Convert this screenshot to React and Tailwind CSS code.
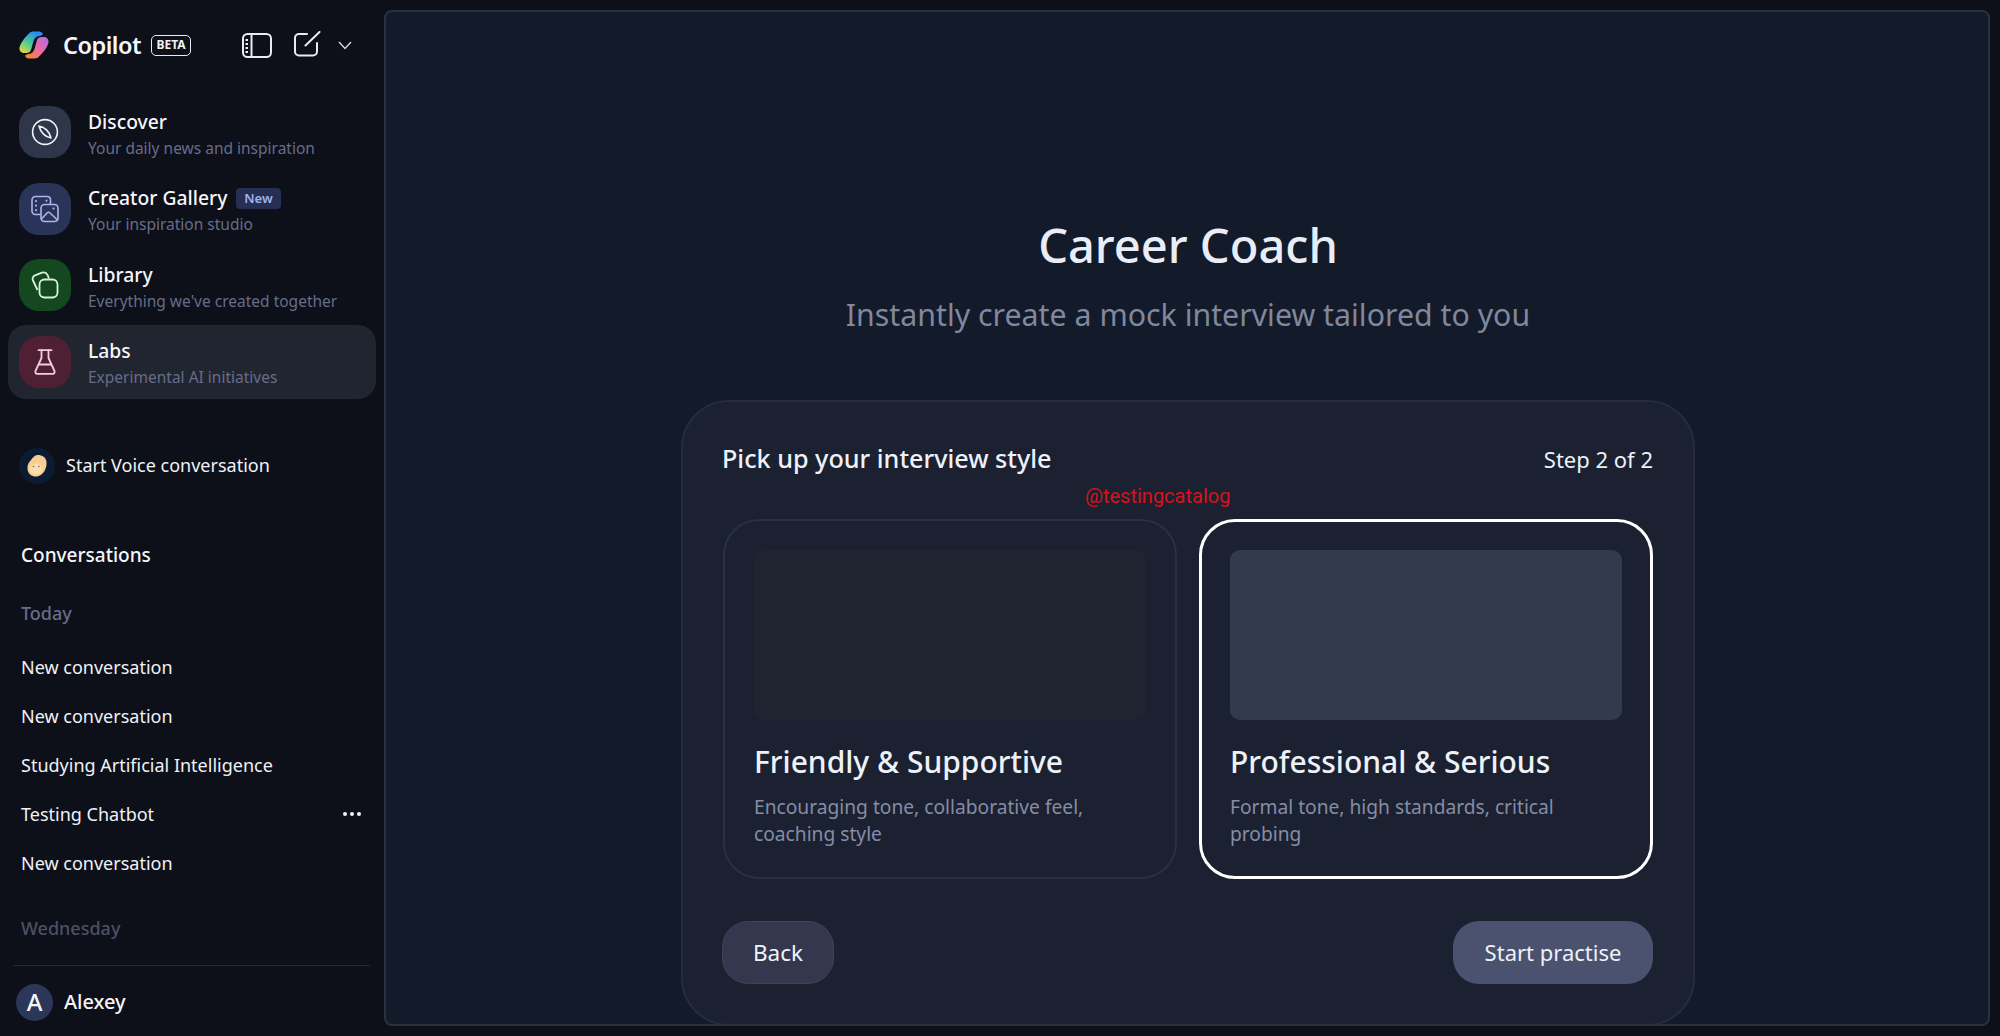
import React from "react";

const FONT = "font-['Noto_Sans',sans-serif]";

function Logo() {
  return (
    <svg width="30" height="28" viewBox="0 0 30 28" fill="none">
      <defs>
        <linearGradient id="lb" x1="3" y1="22" x2="17" y2="2" gradientUnits="userSpaceOnUse">
          <stop offset="0" stopColor="#f6d33f" />
          <stop offset="0.45" stopColor="#4fcf8f" />
          <stop offset="1" stopColor="#2a8cf0" />
        </linearGradient>
        <linearGradient id="rb" x1="29" y1="7" x2="10" y2="28" gradientUnits="userSpaceOnUse">
          <stop offset="0" stopColor="#b56ce8" />
          <stop offset="0.55" stopColor="#ee6a9a" />
          <stop offset="1" stopColor="#f6892c" />
        </linearGradient>
      </defs>
      <path d="M10 2.5 C11 1 13 0.5 15 0.5 H20 C22 0.5 23.5 1.5 24 3.5 L21 5 C17.5 5 15.5 7 14.5 10 L12 19 C11.4 21 9.6 22 7.5 22 H5 C2 22 0 19.5 0.5 16.5 C1.5 11.5 6 6.5 10 2.5Z" fill="url(#lb)" />
      <path d="M20 25.5 C19 27 17 27.5 15 27.5 H10 C8 27.5 6.5 26.5 6 24.5 L9 23 C12.5 23 14.5 21 15.5 18 L18 9 C18.6 7 20.4 6 22.5 6 H25 C28 6 30 8.5 29.5 11.5 C28.5 16.5 24 21.5 20 25.5Z" fill="url(#rb)" />
    </svg>
  );
}

function SidebarToggle() {
  return (
    <svg width="30" height="25" viewBox="0 0 30 25" fill="none" stroke="#e8ebf2" strokeWidth="2">
      <rect x="1" y="1" width="28" height="23" rx="4.5" />
      <path d="M9.5 1 V24" />
      <path d="M3.5 7 H6 M3.5 11 H6 M3.5 15 H6 M3.5 19 H6" strokeWidth="1.8" />
    </svg>
  );
}

function Compose() {
  return (
    <svg width="27" height="26" viewBox="0 0 27 26" fill="none" stroke="#e8ebf2" strokeWidth="2" strokeLinecap="round">
      <path d="M13 3 H5 C2.8 3 1 4.8 1 7 V20.5 C1 22.7 2.8 24.5 5 24.5 H19 C21.2 24.5 23 22.7 23 20.5 V12" />
      <path d="M11.5 14.5 L25.5 1" />
    </svg>
  );
}

function CompassIcon() {
  return (
    <svg width="28" height="28" viewBox="0 0 28 28" fill="none" stroke="#f1f3f8" strokeWidth="1.6">
      <circle cx="14" cy="14" r="12.4" />
      <path d="M8 8 C13.5 9 18.5 13.5 20 20 C14.5 19 9.5 14.5 8 8Z" strokeLinejoin="round" />
    </svg>
  );
}

function GalleryIcon() {
  return (
    <svg width="28" height="28" viewBox="0 0 28 28" fill="none" stroke="#a9b7ec" strokeWidth="1.6" strokeLinejoin="round" strokeLinecap="round">
      <path d="M9 19.5 H4.5 C2.5 19.5 1 18 1 16 V5 C1 3 2.5 1.5 4.5 1.5 H16 C18 1.5 19.5 3 19.5 5 V9" />
      <path d="M5 6 V6.2 M5 10.5 V10.7 M5 15 V15.2 M15.5 5.5 V5.7" strokeWidth="2" />
      <rect x="10" y="9.5" width="17" height="17" rx="3.5" />
      <path d="M10.5 24 L16 18 C17 17 18 17 19 18 L26.5 25" />
      <circle cx="22.5" cy="13.5" r="1.1" fill="#a9b7ec" stroke="none" />
    </svg>
  );
}

function LibraryIcon() {
  return (
    <svg width="28" height="28" viewBox="0 0 28 28" fill="none" stroke="#d9f2dd" strokeWidth="1.8" strokeLinejoin="round">
      <path d="M6.5 19 L2 9.5 C1 7.5 2 5.2 4 4.4 L11 1.7 C13.2 0.9 15.5 2 16.6 4 L18 7.5" />
      <rect x="8.5" y="8.5" width="18" height="18" rx="5" />
    </svg>
  );
}

function FlaskIcon() {
  return (
    <svg width="22" height="26" viewBox="0 0 22 26" fill="none" stroke="#f6cdd7" strokeWidth="1.8" strokeLinejoin="round" strokeLinecap="round">
      <path d="M4.5 1.2 H17.5" />
      <path d="M7.5 1.2 V9 L1.5 22 C1 23.5 1.8 24.8 3.2 24.8 H18.8 C20.2 24.8 21 23.5 20.5 22 L14.5 9 V1.2" />
      <path d="M4.8 15.5 H17.2" />
    </svg>
  );
}

function VoiceFace() {
  return (
    <div className="w-[36px] h-[36px] rounded-full bg-[#0c1b34] flex items-center justify-center">
      <svg width="22" height="24" viewBox="0 0 22 24">
        <path d="M12 1 C16 1 20 3 20.5 8 C21 14 18 21 11 22.5 C6 23 2 20 1.5 15 C1 11 3 8 5 6 C7 3 9 1 12 1Z" fill="#f8cd92" />
        <ellipse cx="10" cy="15" rx="6.5" ry="5.5" fill="#fbdcb0" />
        <circle cx="7.5" cy="12.5" r="0.8" fill="#8a6a4a" />
        <circle cx="13" cy="12.5" r="0.8" fill="#8a6a4a" />
      </svg>
    </div>
  );
}

function NavItem({ title, sub, tile, icon, active, badge }) {
  return (
    <div className={`h-[74px] w-[368px] rounded-[18px] flex items-center pl-[11px] ${active ? "bg-[#21252f]" : ""}`}>
      <div className={`w-[52px] h-[52px] rounded-[20px] flex items-center justify-center shrink-0 ${tile}`}>{icon}</div>
      <div className="ml-[17px] mt-[4px] flex flex-col">
        <div className="flex items-center h-[26px]">
          <span className="text-[19.3px] font-medium text-[#f5f6fa] leading-[26px]">{title}</span>
          {badge && (
            <span className="ml-[9px] h-[21px] px-[8px] rounded-[4px] bg-[#262f53] text-[#a3b2ea] text-[13px] font-semibold leading-[21px]">
              {badge}
            </span>
          )}
        </div>
        <span className="text-[15.5px] text-[#666d8a] leading-[24px] mt-[1px]">{sub}</span>
      </div>
    </div>
  );
}

function Convo({ children, dots }) {
  return (
    <div className="h-[49px] flex items-center justify-between pl-[21px] pr-[23px] text-[18px] text-[#f0f2f7]">
      <span>{children}</span>
      {dots && (
        <span className="flex gap-[3px]">
          <i className="w-[4px] h-[4px] rounded-full bg-[#f0f2f7]" />
          <i className="w-[4px] h-[4px] rounded-full bg-[#f0f2f7]" />
          <i className="w-[4px] h-[4px] rounded-full bg-[#f0f2f7]" />
        </span>
      )}
    </div>
  );
}

function Sidebar() {
  return (
    <aside className="w-[384px] shrink-0 h-full flex flex-col overflow-hidden">
      <div className="h-[95px] shrink-0 flex items-start pt-[31px] pl-[19px]">
        <Logo />
        <span className="ml-[14px] -mt-[1px] text-[23.5px] leading-[30px] font-semibold text-[#f5f6fa] tracking-[-0.5px]">Copilot</span>
        <span className="ml-[10px] mt-[4px] h-[21px] w-[40px] border-[1.5px] border-[#e8ebf2] rounded-[5px] text-[12px] leading-[18px] font-bold text-[#f0f2f7] text-center">BETA</span>
        <span className="ml-[51px] mt-[2px]"><SidebarToggle /></span>
        <span className="ml-[22px]"><Compose /></span>
        <svg className="ml-[17px] mt-[10px]" width="14" height="9" viewBox="0 0 14 9" fill="none" stroke="#d5d8e2" strokeWidth="1.4">
          <path d="M1 1 L7 7.5 L13 1" />
        </svg>
      </div>
      <div className="flex flex-col gap-[2.5px] pl-[8px]">
        <NavItem title="Discover" sub="Your daily news and inspiration" tile="bg-[#30364a]" icon={<CompassIcon />} />
        <NavItem title="Creator Gallery" sub="Your inspiration studio" tile="bg-[#2a3358]" icon={<GalleryIcon />} badge="New" />
        <NavItem title="Library" sub="Everything we've created together" tile="bg-[#14481f]" icon={<LibraryIcon />} />
        <NavItem title="Labs" sub="Experimental AI initiatives" tile="bg-[#4f2034]" icon={<FlaskIcon />} active />
      </div>
      <div className="mt-[49px] pl-[19px] flex items-center h-[36px]">
        <VoiceFace />
        <span className="ml-[11px] text-[18px] text-[#f0f2f7]">Start Voice conversation</span>
      </div>
      <div className="mt-[57px] pl-[21px] text-[19px] leading-[28px] font-medium text-[#f5f6fa]">Conversations</div>
      <div className="mt-[30px] pl-[21px] text-[18px] leading-[28px] font-medium text-[#666d8a]">Today</div>
      <div className="mt-[16px] flex flex-col">
        <Convo>New conversation</Convo>
        <Convo>New conversation</Convo>
        <Convo>Studying Artificial Intelligence</Convo>
        <Convo dots>Testing Chatbot</Convo>
        <Convo>New conversation</Convo>
      </div>
      <div className="mt-[26px] pl-[21px] text-[18px] leading-[28px] font-medium text-[#4c5163]">Wednesday</div>
      <div className="mt-[23px] ml-[13px] w-[357px] h-[1px] bg-[#262a36] shrink-0" />
      <div className="mt-[18px] ml-[16px] flex items-center">
        <div className="w-[37px] h-[37px] rounded-full bg-[#2b3659] flex items-center justify-center text-[24px] font-medium text-[#f5f6fa]">A</div>
        <span className="ml-[11px] text-[20px] font-medium text-[#f5f6fa]">Alexey</span>
      </div>
    </aside>
  );
}

function StyleCard({ title, lines, selected }) {
  return (
    <div
      className={`w-[454px] h-[360px] rounded-[36px] flex flex-col ${
        selected ? "border-[3px] border-white p-[28px]" : "border-2 border-[#2a3040] p-[29px]"
      }`}
    >
      <div className={`h-[170px] shrink-0 rounded-[10px] ${selected ? "bg-[#343a4e]" : "bg-[#1e2430]"}`} />
      <div className="mt-[20px] text-[30px] leading-[44px] font-medium text-[#eef1f8]">{title}</div>
      <div className="mt-[9px] text-[19.2px] leading-[27px] text-[#868ca5]">
        {lines.map((l) => (
          <div key={l}>{l}</div>
        ))}
      </div>
    </div>
  );
}

function Main() {
  return (
    <main className="flex-1 my-[10px] mr-[10px] pl-[2px] rounded-[8px] border-2 border-[#2b3040] bg-[#131a29] overflow-hidden flex flex-col items-center">
      <h1 className="mt-[201px] text-[47px] leading-[64px] font-medium text-[#e9edf7]">Career Coach</h1>
      <p className="mt-[17px] text-[30.3px] leading-[42px] text-[#80879f]">Instantly create a mock interview tailored to you</p>
      <section className="mt-[64px] w-[1014px] h-[626px] shrink-0 rounded-[48px] border-2 border-[#262c3c] bg-[#1b2131] px-[40px] pt-[41px] relative">
        <div className="flex items-center justify-between h-[32px]">
          <span className="text-[25.2px] font-medium text-[#eef1f8] -ml-[1px]">Pick up your interview style</span>
          <span className="text-[22px] text-[#eef1f8]">Step 2 of 2</span>
        </div>
        <span className="absolute left-[402px] top-[81px] font-['Roboto',sans-serif] text-[20px] leading-[26px] text-[#d8121a]">@testingcatalog</span>
        <div className="mt-[44px] flex justify-between">
          <StyleCard title="Friendly & Supportive" lines={["Encouraging tone, collaborative feel,", "coaching style"]} />
          <StyleCard selected title="Professional & Serious" lines={["Formal tone, high standards, critical", "probing"]} />
        </div>
        <div className="mt-[42px] flex justify-between">
          <button className="h-[63px] w-[112px] -ml-[1px] rounded-[26px] bg-[#33384f] border border-[#3e4358] text-[22.5px] text-[#f2f4f9]">Back</button>
          <button className="h-[63px] w-[200px] rounded-[26px] bg-[#4a5270] text-[22px] text-[#eef1f8]">Start practise</button>
        </div>
      </section>
    </main>
  );
}

export default function App() {
  return (
    <div className={`w-[2000px] h-[1036px] flex overflow-hidden bg-[#0d0f19] ${FONT}`}>
      <Sidebar />
      <Main />
    </div>
  );
}
